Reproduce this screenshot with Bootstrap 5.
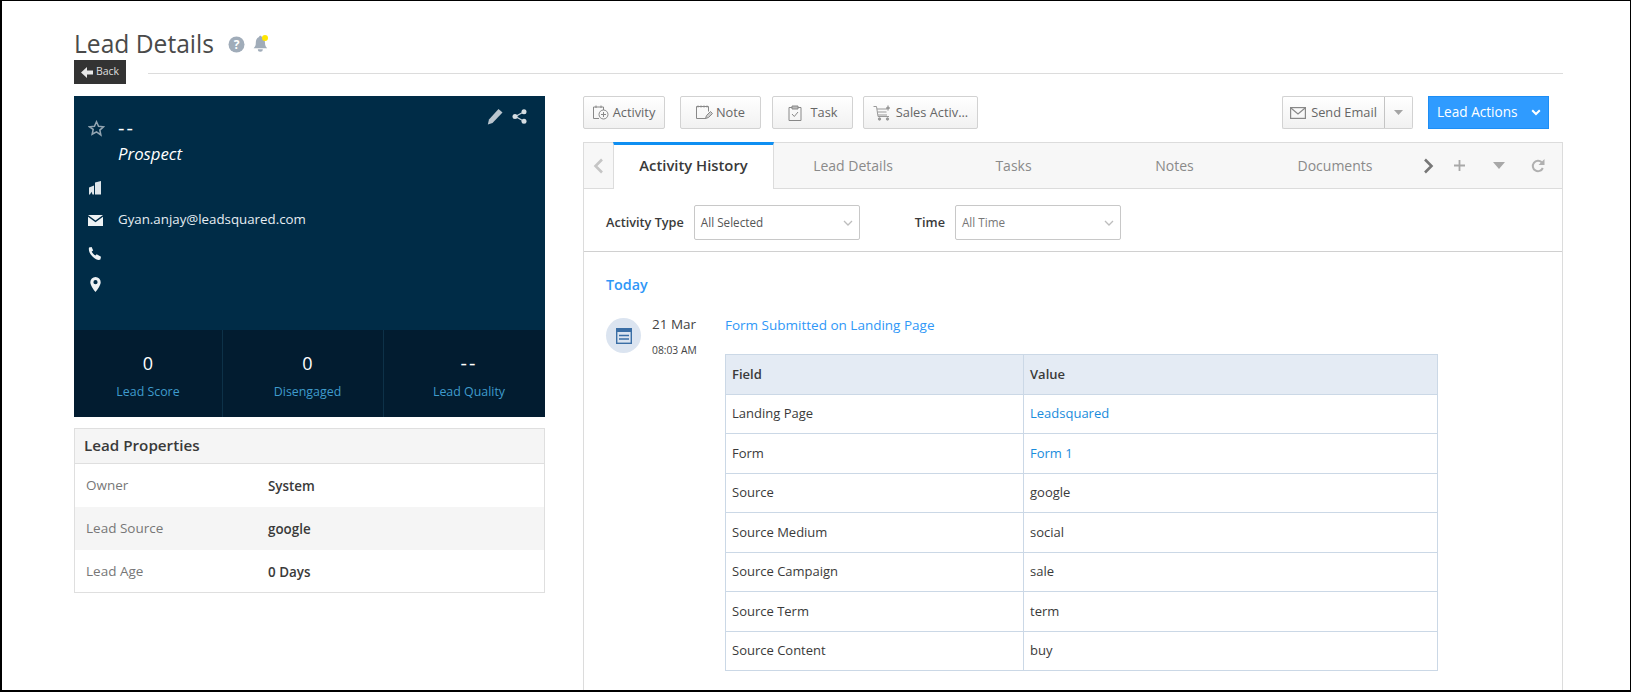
<!DOCTYPE html>
<html lang="en">
<head>
<meta charset="utf-8">
<title>Lead Details</title>
<link rel="stylesheet" href="https://cdn.jsdelivr.net/npm/bootstrap@5.3.0/dist/css/bootstrap.min.css">
<style>
html,body{height:100%;overflow:hidden}
body{font-family:"Open Sans","Noto Sans",sans-serif;font-size:13px;color:#333;background:#fff}
.frame{height:692px;border:1px solid #000;border-width:1px 1px 2px 2px;padding:0 67px 0 72px;overflow:hidden}
.page-title{font-size:24.6px;line-height:33px;font-weight:400;color:#4a4a4a;margin:0;padding-top:26px}
.title-icons{gap:6px;margin-left:14px;padding-top:35px}
.back-row{height:24px;margin-top:0}
.back-btn{width:52px;height:24px;background:#333;color:#ddd;border:0;border-radius:0;font-size:10.5px;padding:0;display:flex;align-items:center;justify-content:center;gap:3px}
.head-rule{flex:1;height:1px;background:#dcdcdc;margin-left:22px;margin-top:2px}
.cols{margin-top:12px;gap:38px}
.left-col{width:471px;flex:none}
.right-col{flex:1;min-width:0}
.lead-card{background:#002c47;color:#fff;height:321px;display:flex;flex-direction:column}
.card-top{flex:1;padding:20px 15px 0 14px;position:relative}
.card-tools{position:absolute;top:12px;right:18px;gap:9px}
.info-row{display:flex;align-items:center}
.info-ico{width:30px;flex:none;display:flex}
.lead-name{font-size:18px;line-height:24px;height:24px}
.dash-text{letter-spacing:2px;font-size:20px}
.lead-type{font-size:16.8px;font-style:italic;font-weight:500;line-height:24px;padding-left:30px;margin-top:2px;height:24px}
.row-org{margin-top:10px;height:24px}
.row-mail{margin-top:8px;height:24px;font-size:13.3px;color:#e6edf2}
.row-phone{margin-top:9px;height:24px}
.row-pin{margin-top:7px;height:24px}
.card-stats{background:#021c30;height:87px;display:flex;color:#fff}
.stat-cell{text-align:center;padding-top:21px;border-right:1px solid #0d3148}
.stat-cell:nth-child(1){width:149px}
.stat-cell:nth-child(2){width:161px;padding-left:9px}
.stat-cell:nth-child(3){flex:1;border-right:0;padding-left:9px}
.stat-num{font-size:18px;line-height:24px}
.stat-num-dash{letter-spacing:2px;font-size:20px}
.stat-label{font-size:12.4px;line-height:18px;color:#3f9bcc;margin-top:8px}
.props{border:1px solid #dfdfdf;margin-top:11px}
.props-head{background:#f5f5f5;border-bottom:1px solid #dfdfdf;height:35px;font-size:15.2px;font-weight:600;line-height:33px;padding-left:9px;color:#3a3a3a}
.prop-row{height:43px;display:flex;align-items:center;padding:2px 0 0 11px;font-size:13.5px}
.prop-row:last-child{height:42px}
.prop-row.alt{background:#f5f5f5}
.prop-key{width:182px;color:#777;position:relative;top:-1px}
.prop-val{font-weight:600;color:#3a3a3a;font-size:13.4px;position:relative;top:0}
.tool-row{height:33px;gap:15px}
.tool-btn{height:33px;border:1px solid #d2d2d2;border-radius:2px;background:linear-gradient(#fff,#f1f1f1);color:#666;font-size:12.8px;padding:0;display:flex;align-items:center;justify-content:center;gap:3px}
.w-act{width:82px;gap:4px}.w-note{width:81px}.w-task{width:81px;margin-left:-4px}.w-sales{width:115px;margin-left:-5px}
.split{display:flex}
.w-mail{width:103px;border-right:1px solid #c4c4c4;border-radius:2px 0 0 2px}
.w-caret{width:28px;border-left:0;border-radius:0 2px 2px 0}
.action-btn{width:121px;height:33px;background:#2f9bff;color:#fff;border:1px solid #1d8ef5;border-radius:0;font-size:13.6px;display:flex;align-items:center;justify-content:space-between;padding:0 7px 0 8px;margin-right:14px}
.panel{border:1px solid #dcdcdc;border-bottom:0;margin-top:13px;height:560px}
.tab-bar{height:46px;background:#f7f7f7;border-bottom:1px solid #dcdcdc;display:flex;align-items:stretch;position:relative}
.tab-nav{width:29px;display:flex;align-items:center;justify-content:center;flex:none}
.tab-item{flex:none;display:flex;align-items:center;justify-content:center;font-size:14px;font-weight:500;color:#8a8a8a}
.tab-active{width:161px;background:#fff;border-top:3px solid #0f8ff2;border-left:1px solid #dcdcdc;border-right:1px solid #dcdcdc;margin-bottom:-1px;margin-top:-1px;color:#3a3a3a;font-weight:600;font-size:14.8px;height:47px;padding-bottom:3px}
.t1{width:158px}.t2{width:163px}.t3{width:159px}.t4{width:162px}
.tab-tools{display:flex;align-items:center;gap:0;margin-left:-7px;flex:none}
.tab-tool{width:39px;display:flex;justify-content:center;align-items:center}
.tab-tool-next{margin-right:-8px}
.filter-row{height:63px;border-bottom:1px solid #d0d0d0;display:flex;align-items:center;padding:4px 0 0 22px}
.filter-label{font-weight:600;font-size:12.7px;color:#3a3a3a;padding-top:1px}
.fake-select{height:35px;border:1px solid #c8c8c8;border-radius:2px;display:flex;align-items:center;justify-content:space-between;padding:2px 6px 0;font-size:11.7px;color:#555;background:#fff}
.fs-a{width:166px;margin-left:10px}
.fs-b{width:166px;margin-left:10px;color:#777}
.time-label{margin-left:55px}
.feed{padding:0 22px}
.day-head{color:#2f97f7;font-size:14.3px;font-weight:600;line-height:20px;margin-top:23px}
.entry{margin-top:20px;display:flex}
.entry-ico{width:35px;height:35px;border-radius:50%;background:#dbe4f0;display:flex;align-items:center;justify-content:center;flex:none;margin-top:3px}
.entry-date{width:73px;margin-left:11px;flex:none;margin-top:-1px}
.date-main{font-size:13.5px;line-height:20px;color:#444}
.date-time{font-size:10.3px;line-height:14px;color:#444;margin-top:9px}
.entry-link{color:#2f97f7;font-size:13.5px;text-decoration:none;line-height:20px;display:block}
.field-table{width:713px;margin:19px 0 0;border-collapse:collapse;font-size:13px}
.field-table th,.field-table td{border:1px solid #cbd8e6;height:39.5px;padding:0 6px;vertical-align:middle;box-shadow:none;color:#3a3a3a}
.field-table th{background:#e4ebf4;font-weight:600;font-size:13px}
.field-table .c1{width:298px}
.field-table a{color:#1a8cdc;text-decoration:none}
</style>
</head>
<body>
<div class="frame">
  <div class="d-flex">
    <h1 class="page-title">Lead Details</h1>
    <div class="title-icons d-flex align-items-start">
      <svg width="17" height="17" viewBox="0 0 17 17"><circle cx="8.500" cy="8.500" r="8" fill="#a0acb9"/><text x="8.500" y="12.500" font-size="12" font-weight="700" text-anchor="middle" fill="#fff" font-family="Open Sans">?</text></svg>
      <svg width="20" height="20" viewBox="0 0 20 20" style="margin-top:-2px"><path d="M8 3c.4-1.600 2.400-1.600 2.800 0 2.600 1 3.200 3.500 3.200 6 0 2.800 1 4 2.200 5.200H2.600C3.800 13 4.800 11.800 4.800 9c0-2.500.6-5 3.200-6z" fill="#a0acb9"/><path d="M6.800 15.200h5a2.500 2.500 0 0 1-5 0z" fill="#a0acb9"/><circle cx="14" cy="4" r="3" fill="#ffe600"/></svg>
    </div>
  </div>
  <div class="back-row d-flex align-items-center">
    <button class="back-btn" type="button">
      <svg width="12" height="11" viewBox="0 0 12 11"><path d="M6 0L0 5.500 6 11V7.500h6v-4H6z" fill="#e8e8e8"/></svg>Back
    </button>
    <div class="head-rule"></div>
  </div>
  <div class="cols d-flex align-items-start">
    <div class="left-col">
      <div class="lead-card">
        <div class="card-top">
          <div class="card-tools d-flex align-items-center">
            <svg width="16" height="17" viewBox="0 0 16 17"><path d="M11.500 1l4 3.500L5.500 15 .8 16.500 2 11.500z" fill="#b9c5ce"/></svg>
            <svg width="15" height="15" viewBox="0 0 15 15"><path d="M11.500 3L3.500 7.500l8 4.500" stroke="#c5d0d8" stroke-width="1.300" fill="none"/><circle cx="12" cy="2.800" r="2.500" fill="#d5dde2"/><circle cx="3" cy="7.500" r="2.500" fill="#d5dde2"/><circle cx="12" cy="12.200" r="2.500" fill="#d5dde2"/></svg>
          </div>
          <div class="info-row lead-name">
            <span class="info-ico"><svg width="17" height="17" viewBox="0 0 24 24"><path d="M12 2.500l2.900 6.300 6.900.8-5.100 4.700 1.400 6.800L12 16.700l-6.100 3.400 1.400-6.800L2.200 9.600l6.900-.8z" fill="none" stroke="#93a5b2" stroke-width="2.200"/></svg></span>
            <span class="dash-text">--</span>
          </div>
          <div class="lead-type">Prospect</div>
          <div class="info-row row-org">
            <span class="info-ico"><svg width="14" height="14" viewBox="0 0 14 14"><path d="M7 1.500l6-1.500V13.500H7zM1 6.500L6 4.500V13.500H4.500L3.500 10.800 2 13.500H1z" fill="#dfe6ea"/></svg></span>
          </div>
          <div class="info-row row-mail">
            <span class="info-ico"><svg width="15" height="11" viewBox="0 0 15 11"><path d="M0 0h15L7.500 5.500zM0 1.800l7.500 5.400L15 1.800V11H0z" fill="#eef2f4"/></svg></span>
            <span>Gyan.anjay@leadsquared.com</span>
          </div>
          <div class="info-row row-phone">
            <span class="info-ico"><svg width="13" height="13" viewBox="0 0 13 13"><path d="M1 .5L3.600 0l1.600 3.400-1.500 1.200c.8 1.700 2 3 3.700 4l1.300-1.300L13 9.800 12.400 12.500C11 13.500 8 13 5 10 1.500 6.800.4 3 1 .5z" fill="#eef2f4"/></svg></span>
          </div>
          <div class="info-row row-pin">
            <span class="info-ico"><svg width="11" height="15" viewBox="0 0 11 15" style="margin-left:2px"><path d="M5.500 0A5.200 5.200 0 0 0 .3 5.200C.3 8.800 5.500 15 5.500 15s5.200-6.200 5.200-9.800A5.200 5.200 0 0 0 5.500 0zm0 7.300a2.100 2.100 0 1 1 0-4.200 2.100 2.100 0 0 1 0 4.200z" fill="#eef2f4"/></svg></span>
          </div>
        </div>
        <div class="card-stats">
          <div class="stat-cell"><div class="stat-num">0</div><div class="stat-label">Lead Score</div></div>
          <div class="stat-cell"><div class="stat-num">0</div><div class="stat-label">Disengaged</div></div>
          <div class="stat-cell"><div class="stat-num stat-num-dash">--</div><div class="stat-label">Lead Quality</div></div>
        </div>
      </div>
      <div class="props">
        <div class="props-head">Lead Properties</div>
        <div class="prop-row"><span class="prop-key">Owner</span><span class="prop-val">System</span></div>
        <div class="prop-row alt"><span class="prop-key">Lead Source</span><span class="prop-val">google</span></div>
        <div class="prop-row"><span class="prop-key">Lead Age</span><span class="prop-val">0 Days</span></div>
      </div>
    </div>
    <div class="right-col">
      <div class="tool-row d-flex">
        <button class="tool-btn w-act" type="button"><svg width="16" height="15" viewBox="0 0 16 15" fill="none" stroke="#888"><path d="M6 13.500H.5V2h10v3"/><path d="M3 .5v2.500M8 .5v2.500"/><circle cx="10.500" cy="9.500" r="4.500"/><path d="M10.500 7v5M8 9.500h5"/></svg>Activity</button>
        <button class="tool-btn w-note" type="button"><svg width="17" height="15" viewBox="0 0 17 15" fill="none" stroke="#888"><path d="M10 13.500H.5V1.500h12v5"/><path d="M2 .5v2M5 .5v2M8 .5v2M11 .5v2"/><path d="M9.500 13.500l1-3 4-4 2 2-4 4z" fill="#ccc"/></svg>Note</button>
        <button class="tool-btn w-task" type="button"><svg width="14" height="16" viewBox="0 0 14 16" fill="none" stroke="#888" style="margin-right:6px"><path d="M4 2.500H1v13h12v-13h-3"/><path d="M4 1h6v3H4z" fill="#bbb"/><path d="M4 9l2.300 2.500L10 7"/></svg>Task</button>
        <button class="tool-btn w-sales" type="button"><svg width="20" height="16" viewBox="0 0 20 16" fill="none" stroke="#999"><path d="M.5 1.500h3l1.500 10h11M4 4h10M4.500 7h9M5 10h9"/><circle cx="6.500" cy="14" r="1.200" fill="#999"/><circle cx="14.500" cy="14" r="1.200" fill="#999"/><path d="M15 .5v5M13 3h4" stroke="#777"/></svg>Sales Activ...</button>
        <div class="split ms-auto">
          <button class="tool-btn w-mail" type="button"><svg width="16" height="12" viewBox="0 0 16 12" fill="none" stroke="#888" stroke-width="1.200" style="margin-right:2px"><rect x=".6" y=".6" width="14.800" height="10.800"/><path d="M.6.8L8 7l7.400-6.200"/></svg>Send Email</button>
          <button class="tool-btn w-caret" type="button"><svg width="9" height="5" viewBox="0 0 9 5"><path d="M0 0h9L4.500 5z" fill="#a5a5a5"/></svg></button>
        </div>
        <button class="action-btn" type="button">Lead Actions<svg width="10" height="7" viewBox="0 0 10 7"><path d="M1.200 1.200L5 5l3.800-3.800" fill="none" stroke="#fff" stroke-width="2"/></svg></button>
      </div>
      <div class="panel">
        <div class="tab-bar">
          <div class="tab-nav"><svg width="11" height="16" viewBox="0 0 11 16"><path d="M9 1.500L2.500 8 9 14.500" fill="none" stroke="#c5c5c5" stroke-width="2.600"/></svg></div>
          <div class="tab-item tab-active">Activity History</div>
          <div class="tab-item t1">Lead Details</div>
          <div class="tab-item t2">Tasks</div>
          <div class="tab-item t3">Notes</div>
          <div class="tab-item t4">Documents</div>
          <div class="tab-tools">
            <span class="tab-tool tab-tool-next"><svg width="11" height="16" viewBox="0 0 11 16"><path d="M2 1.500L8.500 8 2 14.500" fill="none" stroke="#777" stroke-width="2.600"/></svg></span>
            <span class="tab-tool"><svg width="13" height="13" viewBox="0 0 13 13"><path d="M6.500 1v11M1 6.500h11" stroke="#a8a8a8" stroke-width="1.800"/></svg></span>
            <span class="tab-tool"><svg width="12" height="7" viewBox="0 0 12 7"><path d="M0 0h12L6 7z" fill="#a8a8a8"/></svg></span>
            <span class="tab-tool"><svg width="14" height="14" viewBox="0 0 14 14" fill="none"><path d="M11.800 9A5.200 5.200 0 1 1 10.700 3.300" stroke="#b0b0b0" stroke-width="2"/><path d="M13.500 0v6h-6z" fill="#b0b0b0"/></svg></span>
          </div>
        </div>
        <div class="filter-row">
          <span class="filter-label">Activity Type</span>
          <div class="fake-select fs-a"><span>All Selected</span><svg width="10" height="6" viewBox="0 0 10 6"><path d="M1 1l4 4 4-4" fill="none" stroke="#bdbdbd" stroke-width="1.300"/></svg></div>
          <span class="filter-label time-label">Time</span>
          <div class="fake-select fs-b"><span>All Time</span><svg width="10" height="6" viewBox="0 0 10 6"><path d="M1 1l4 4 4-4" fill="none" stroke="#bdbdbd" stroke-width="1.300"/></svg></div>
        </div>
        <div class="feed">
          <div class="day-head">Today</div>
          <div class="entry">
            <div class="entry-ico"><svg width="16" height="16" viewBox="0 0 16 16"><rect x=".7" y=".7" width="14.600" height="14.600" fill="none" stroke="#3a6ea5" stroke-width="1.400"/><rect x="1" y="1" width="14" height="3" fill="#3a6ea5"/><path d="M3 7.500h10M3 11h10" stroke="#3a6ea5" stroke-width="1.500"/></svg></div>
            <div class="entry-date"><div class="date-main">21 Mar</div><div class="date-time">08:03 AM</div></div>
            <div class="entry-body">
              <a class="entry-link" href="#">Form Submitted on Landing Page</a>
              <table class="field-table">
                <thead><tr><th class="c1">Field</th><th>Value</th></tr></thead>
                <tbody>
                  <tr><td>Landing Page</td><td><a href="#">Leadsquared</a></td></tr>
                  <tr><td>Form</td><td><a href="#">Form 1</a></td></tr>
                  <tr><td>Source</td><td>google</td></tr>
                  <tr><td>Source Medium</td><td>social</td></tr>
                  <tr><td>Source Campaign</td><td>sale</td></tr>
                  <tr><td>Source Term</td><td>term</td></tr>
                  <tr><td>Source Content</td><td>buy</td></tr>
                </tbody>
              </table>
            </div>
          </div>
        </div>
      </div>
    </div>
  </div>
</div>
<script src="https://cdn.jsdelivr.net/npm/bootstrap@5.3.0/dist/js/bootstrap.bundle.min.js"></script>
</body>
</html>
